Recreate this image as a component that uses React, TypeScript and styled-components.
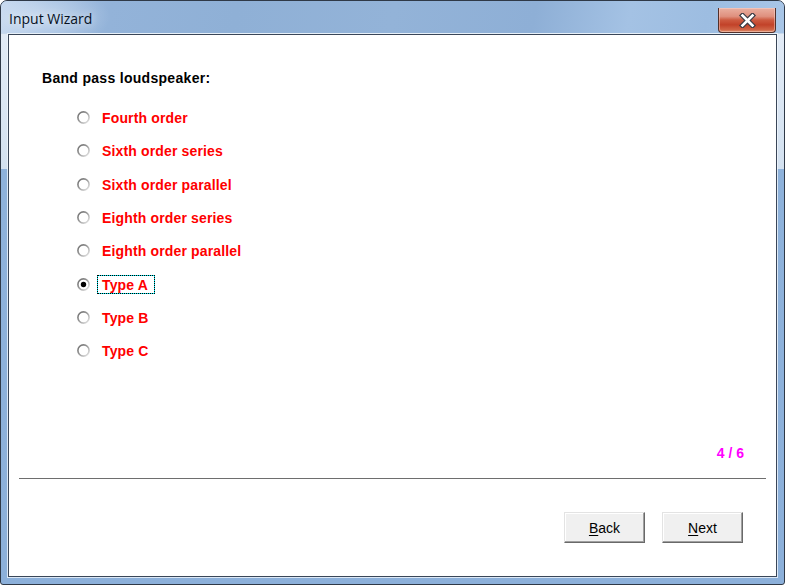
import React from "react";
import styled, { createGlobalStyle } from "styled-components";

const GlobalStyle = createGlobalStyle`
  html, body { margin: 0; padding: 0; background: #ffffff; }
  body { width: 785px; height: 585px; overflow: hidden; }
  * { box-sizing: border-box; }
`;

const Frame = styled.div`
  width: 785px;
  height: 585px;
  border: 1px solid #2f3947;
  border-radius: 7px 7px 3px 3px;
  overflow: hidden;
  display: flex;
  flex-direction: column;
  background: linear-gradient(
    to bottom,
    #8fb0d6 0px,
    #8fb0d6 33px,
    #e2ebf6 33px,
    #d3e1f0 168px,
    #8eb2db 168px,
    #8cb0da 100%
  );
`;

const TitleBar = styled.div`
  height: 33px;
  flex: none;
  display: flex;
  align-items: flex-start;
  padding: 8px 0 0 8px;
  background:
    radial-gradient(ellipse 70px 30px at 40px 16px, rgba(255,255,255,0.35), rgba(255,255,255,0) 100%),
    linear-gradient(
      100deg,
      #c2d6ee 0%,
      #a5c1e3 6%,
      #93b3d9 14%,
      #8fb0d6 30%,
      #93b3d8 50%,
      #8eafd6 68%,
      #a4c2e4 80%,
      #9dbde1 90%,
      #a9c6e7 100%
    );
  border-bottom: 1px solid #c8d9ec;
`;

const TitleText = styled.span`
  font-family: "Open Sans", "Noto Sans", sans-serif;
  font-size: 14px;
  line-height: 19px;
  color: #07111f;
  text-shadow: 0 0 8px rgba(255, 255, 255, 0.8);
`;

const CloseButton = styled.div`
  margin: -1px 8px 0 auto;
  width: 58px;
  height: 25px;
  border: 1px solid #53302a;
  border-top: none;
  border-radius: 0 0 4px 4px;
  display: flex;
  align-items: center;
  justify-content: center;
  background: linear-gradient(
    to bottom,
    #eab0a1 0%,
    #df907e 35%,
    #cd5a40 50%,
    #c24229 70%,
    #cf6446 90%,
    #e0936f 100%
  );
  box-shadow: inset 0 0 0 1px rgba(255, 220, 210, 0.45);
`;

const Client = styled.div`
  flex: 1;
  margin: 0 7px 7px 7px;
  border: 1px solid #3a4658;
  background: #ffffff;
  box-shadow: 0 0 0 1px rgba(240, 246, 252, 0.8);
  display: flex;
  flex-direction: column;
  padding: 35px 0 33px 0;
  font-family: "Liberation Sans", Arial, sans-serif;
`;

const Heading = styled.div`
  margin-left: 33px;
  font-size: 14px;
  font-weight: bold;
  line-height: 16px;
  letter-spacing: 0.3px;
  color: #000000;
`;

const RadioList = styled.div`
  margin: 15px 0 0 68px;
  display: flex;
  flex-direction: column;
`;

const RadioRow = styled.div`
  height: 33.333px;
  display: flex;
  align-items: center;
  gap: 7px;
`;

const RadioLabel = styled.span<{ $focused: boolean }>`
  font-size: 14px;
  font-weight: bold;
  line-height: 16px;
  letter-spacing: 0.15px;
  color: #ff0000;
  padding: 1px 6px 0 4px;
  border: 1px dotted ${(p) => (p.$focused ? "#000000" : "transparent")};
  background: ${(p) =>
    p.$focused
      ? "linear-gradient(#fff, #fff) padding-box, linear-gradient(#00e5ee, #00e5ee) border-box"
      : "transparent"};
`;

const Footer = styled.div`
  margin-top: auto;
  display: flex;
  flex-direction: column;
`;

const PageCounter = styled.div`
  align-self: flex-end;
  padding-right: 32px;
  font-size: 14px;
  font-weight: bold;
  line-height: 16px;
  color: #ff00ff;
`;

const Separator = styled.div`
  margin: 17px 10px 0 10px;
  height: 1px;
  background: #6e6e6e;
`;

const ButtonRow = styled.div`
  margin-top: 33px;
  padding-right: 33px;
  display: flex;
  justify-content: flex-end;
  gap: 17px;
`;

const Button = styled.div`
  width: 81px;
  height: 31px;
  display: flex;
  align-items: center;
  justify-content: center;
  background: #f0f0f0;
  border: 1px solid;
  border-color: #e3e3e3 #696969 #696969 #e3e3e3;
  box-shadow: inset -1px -1px 0 #a0a0a0, inset 1px 1px 0 #ffffff;
  font-size: 14px;
  line-height: 16px;
  color: #000000;

  u {
    text-decoration: underline;
    text-underline-offset: 2px;
  }
`;

const RadioIcon: React.FC<{ checked: boolean }> = ({ checked }) => (
  <svg width="13" height="13" viewBox="0 0 13 13">
    <defs>
      <linearGradient id="rg" x1="0" y1="0" x2="1" y2="1">
        <stop offset="0%" stopColor="#6a6a6a" />
        <stop offset="45%" stopColor="#979797" />
        <stop offset="100%" stopColor="#ececec" />
      </linearGradient>
    </defs>
    <circle cx="6.5" cy="6.5" r="5.6" fill="#ffffff" stroke="url(#rg)" strokeWidth="1.6" />
    {checked && <circle cx="6.5" cy="6.5" r="2.7" fill="#000000" />}
  </svg>
);

const CloseGlyph: React.FC = () => (
  <svg width="17" height="15" viewBox="0 0 17 15">
    <path d="M3.5 2.5 L13.5 12.5 M13.5 2.5 L3.5 12.5" stroke="#3b3b44" strokeWidth="5" strokeLinecap="square" />
    <path d="M3.5 2.5 L13.5 12.5 M13.5 2.5 L3.5 12.5" stroke="#ffffff" strokeWidth="2.6" strokeLinecap="square" />
  </svg>
);

const options = [
  "Fourth order",
  "Sixth order series",
  "Sixth order parallel",
  "Eighth order series",
  "Eighth order parallel",
  "Type A",
  "Type B",
  "Type C",
];

const selected = 5;

export default function App() {
  return (
    <>
      <GlobalStyle />
      <Frame>
        <TitleBar>
          <TitleText>Input Wizard</TitleText>
          <CloseButton>
            <CloseGlyph />
          </CloseButton>
        </TitleBar>
        <Client>
          <Heading>Band pass loudspeaker:</Heading>
          <RadioList>
            {options.map((o, i) => (
              <RadioRow key={o}>
                <RadioIcon checked={i === selected} />
                <RadioLabel $focused={i === selected}>{o}</RadioLabel>
              </RadioRow>
            ))}
          </RadioList>
          <Footer>
            <PageCounter>4 / 6</PageCounter>
            <Separator />
            <ButtonRow>
              <Button>
                <span>
                  <u>B</u>ack
                </span>
              </Button>
              <Button>
                <span>
                  <u>N</u>ext
                </span>
              </Button>
            </ButtonRow>
          </Footer>
        </Client>
      </Frame>
    </>
  );
}
